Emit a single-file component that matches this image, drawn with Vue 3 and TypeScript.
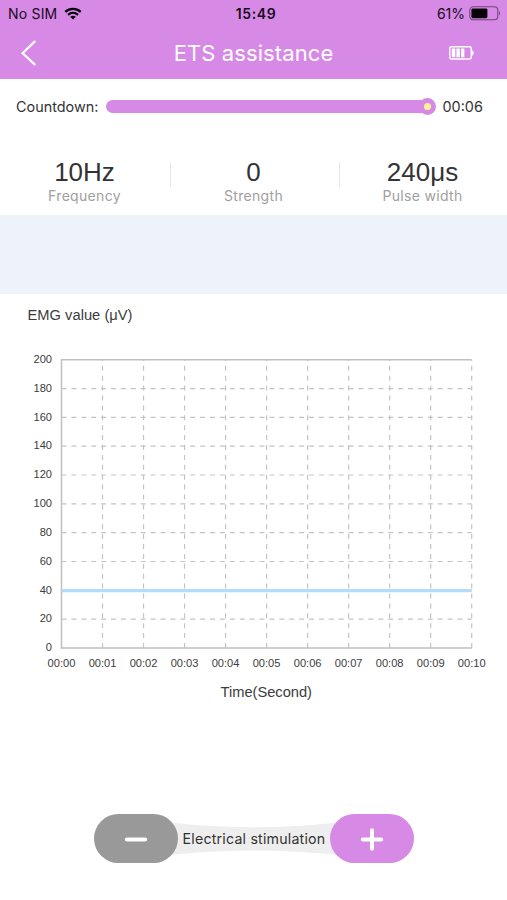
<script setup lang="ts">
interface Metric {
  value: string
  label: string
}

const metrics: Metric[] = [
  { value: '10Hz', label: 'Frequency' },
  { value: '0', label: 'Strength' },
  { value: '240μs', label: 'Pulse width' },
]

const plot = { left: 61.5, right: 471.7, top: 65.7, bottom: 354 }
const maxValue = 200
const current = 40

const yOf = (value: number): number =>
  plot.bottom - (value / maxValue) * (plot.bottom - plot.top)

const rows = Array.from({ length: 11 }, (_, i) => ({
  text: String(i * 20),
  y: yOf(i * 20),
}))

const columns = Array.from({ length: 11 }, (_, i) => ({
  text: `00:${String(i).padStart(2, '0')}`,
  x: plot.left + (i * (plot.right - plot.left)) / 10,
}))
</script>

<template>
  <main class="screen">
    <header class="top">
      <div class="status">
        <div class="carrier">
          <span class="sim">No SIM</span>
          <svg class="wifi" width="18" height="13" viewBox="0 0 18 13">
            <path d="M1.3 4.9C5.7.9 12.3.9 16.7 4.9" />
            <path d="M4 7.8C6.9 5.3 11.1 5.3 14 7.8" />
            <path class="dot" d="M6.2 9.8Q9 7.7 11.8 9.8L9 12.6Z" />
          </svg>
        </div>
        <span class="clock">15:49</span>
        <div class="power">
          <span class="percent">61%</span>
          <svg width="32" height="15" viewBox="0 0 32 15">
            <rect x=".8" y=".8" width="28" height="13" rx="3.5" fill="none" stroke="#70467a" stroke-width="1.1" />
            <rect x="2.4" y="2.4" width="16" height="9.8" rx="1.4" fill="#080109" />
            <path d="M30 5Q32 7.3 30 9.6Z" fill="#70467a" />
          </svg>
        </div>
      </div>
      <nav class="bar">
        <svg class="back" width="18" height="28" viewBox="0 0 18 28">
          <path d="M14.6 2.6 2.6 14.2 14.6 25.4" />
        </svg>
        <h1>ETS assistance</h1>
        <svg class="device" width="26" height="14" viewBox="0 0 26 14">
          <rect x=".8" y=".8" width="21.4" height="12.2" rx="1.4" fill="none" stroke="#fff" stroke-width="1.4" />
          <path d="M2.8 2.6h3.5v8.6H2.8zM7.4 2.6h3.4v8.6H7.4zM12 2.6h3.4v8.6H12zM22.5 4.3h1.1v1.2h1v2.9h-1v1.3h-1.1z" fill="#fff" />
        </svg>
      </nav>
    </header>

    <section class="countdown">
      <span class="countdown-label">Countdown:</span>
      <div class="track"><i class="knob"></i></div>
      <span class="remaining">00:06</span>
    </section>

    <section class="metrics">
      <div v-for="metric in metrics" :key="metric.label" class="metric">
        <strong>{{ metric.value }}</strong>
        <span>{{ metric.label }}</span>
      </div>
    </section>

    <div class="band"></div>

    <section class="chart">
      <svg width="507" height="420" viewBox="0 0 507 420">
        <text class="caption" x="27.5" y="26" textLength="105">EMG value (μV)</text>
        <g class="grid">
          <line v-for="row in rows.slice(1, 10)" :key="row.text" :x1="plot.left" :x2="plot.right" :y1="row.y" :y2="row.y" />
          <line v-for="column in columns.slice(1)" :key="column.text" :x1="column.x" :x2="column.x" :y1="plot.bottom" :y2="plot.top" />
        </g>
        <path class="frame" :d="`M${plot.right} ${plot.top}H${plot.left}V${plot.bottom}H${plot.right}`" />
        <line class="series" :x1="plot.left" :x2="plot.right" :y1="yOf(current) + 0.3" :y2="yOf(current) + 0.3" />
        <g class="ticks">
          <text v-for="row in rows" :key="row.text" x="52" :y="row.y + 3.2" text-anchor="end">{{ row.text }}</text>
          <text v-for="column in columns" :key="column.text" :x="column.x" y="373" text-anchor="middle">{{ column.text }}</text>
        </g>
        <text class="caption" x="220.5" y="402.7" textLength="91.5">Time(Second)</text>
      </svg>
    </section>

    <section class="controls">
      <button class="minus" type="button" aria-label="Decrease">
        <svg width="24" height="24" viewBox="0 0 24 24"><path d="M2.8 12.5H21.2" /></svg>
      </button>
      <div class="bridge">
        <svg width="168" height="34" viewBox="0 0 168 34" preserveAspectRatio="none">
          <path d="M0 .5Q84 10 168 .5V33Q84 24 0 33Z" fill="#eee" />
        </svg>
        <span>Electrical stimulation</span>
      </div>
      <button class="plus" type="button" aria-label="Increase">
        <svg width="24" height="24" viewBox="0 0 24 24"><path d="M2.8 12.5H21.2M12 3.3V21.7" /></svg>
      </button>
    </section>
  </main>
</template>

<style>
body {
  background: #fff;
}
</style>

<style scoped>
.screen {
  width: 507px;
  height: 900px;
  overflow: hidden;
  display: flex;
  flex-direction: column;
  background: #fff;
  color: #333;
  font-family: Inter, Roboto, sans-serif;
}

.top {
  height: 79px;
  flex: none;
  background: #d689e5;
}

.status {
  height: 27px;
  display: grid;
  grid-template-columns: 1fr auto 1fr;
  align-items: center;
  padding: 0 6px 0 8px;
  color: #190b1c;
  font-size: 14px;
}

.carrier,
.power {
  display: flex;
  align-items: center;
}

.carrier {
  gap: 7px;
}

.sim {
  letter-spacing: 0.2px;
}

.power {
  justify-content: flex-end;
  gap: 4px;
}

.wifi {
  fill: none;
  stroke: #08010a;
  stroke-width: 2.2;
}

.wifi .dot {
  fill: #08010a;
  stroke: none;
}

.clock {
  font-weight: 600;
  letter-spacing: 0.6px;
  margin-left: 3px;
}

.bar {
  height: 51px;
  display: grid;
  grid-template-columns: 60px 1fr 60px;
  align-items: center;
}

.back {
  margin-left: 19.5px;
  fill: none;
  stroke: #fff;
  stroke-width: 2.2;
  stroke-linecap: round;
}

h1 {
  margin: 0;
  color: #fff;
  font-size: 22px;
  font-weight: 400;
  line-height: 50px;
  letter-spacing: 0.1px;
  text-align: center;
}

.device {
  margin-left: 2px;
}

.countdown {
  height: 54px;
  flex: none;
  display: flex;
  align-items: center;
  padding-left: 16px;
  font-size: 14.4px;
}

.countdown-label {
  width: 89.5px;
}

.track {
  width: 325px;
  height: 13px;
  display: flex;
  align-items: center;
  justify-content: flex-end;
  border-radius: 7px;
  background: #d689e5;
}

.knob {
  width: 7px;
  height: 7px;
  flex: none;
  margin-right: -5px;
  border: 5px solid #d689e5;
  border-radius: 50%;
  background: #fff19a;
}

.remaining {
  margin-left: 12px;
}

.metrics {
  height: 82px;
  flex: none;
  display: grid;
  grid-template-columns: repeat(3, 1fr);
}

.metric {
  position: relative;
  display: flex;
  flex-direction: column;
  align-items: center;
  padding-top: 24px;
}

.metric + .metric::before {
  content: "";
  position: absolute;
  top: 29px;
  left: 1px;
  width: 1px;
  height: 25px;
  background: #e6e6e6;
}

.metric strong {
  font-family: "Liberation Sans", Arial, sans-serif;
  font-size: 26px;
  font-weight: 400;
  line-height: 31px;
}

.metric span {
  color: #a0a0a0;
  font-size: 14px;
  line-height: 16px;
  letter-spacing: 0.32px;
}

.band {
  height: 79px;
  flex: none;
  background: #edf3f8;
}

.chart {
  height: 420px;
  flex: none;
  font-family: "Liberation Sans", Arial, sans-serif;
}

.chart svg {
  display: block;
}

.caption {
  fill: #3c3c3c;
  font-size: 14.7px;
}

.grid {
  stroke: #c4c4c4;
  stroke-width: 1.2;
  stroke-dasharray: 5 4.9;
}

.frame {
  fill: none;
  stroke: #bfbfbf;
  stroke-width: 1.5;
}

.series {
  stroke: #b2dbfc;
  stroke-width: 3.4;
}

.ticks {
  fill: #3c3c3c;
  font-size: 11.1px;
}

.controls {
  margin-top: 100px;
  padding-left: 1px;
  height: 49px;
  flex: none;
  display: flex;
  justify-content: center;
}

button {
  width: 84.5px;
  height: 49px;
  flex: none;
  display: flex;
  align-items: center;
  justify-content: center;
  padding: 0;
  border: 0;
  border-radius: 25px;
  z-index: 1;
}

button svg {
  fill: none;
  stroke: #fff;
  stroke-width: 4;
  stroke-linecap: round;
}

.minus {
  background: #999;
}

.plus {
  background: #d689e5;
}

.bridge {
  width: 168px;
  margin: 0 -8.2px;
  display: grid;
  place-items: center;
  font-size: 14.2px;
}

.bridge > * {
  grid-area: 1 / 1;
}

.bridge span {
  white-space: nowrap;
  letter-spacing: 0.2px;
}
</style>
